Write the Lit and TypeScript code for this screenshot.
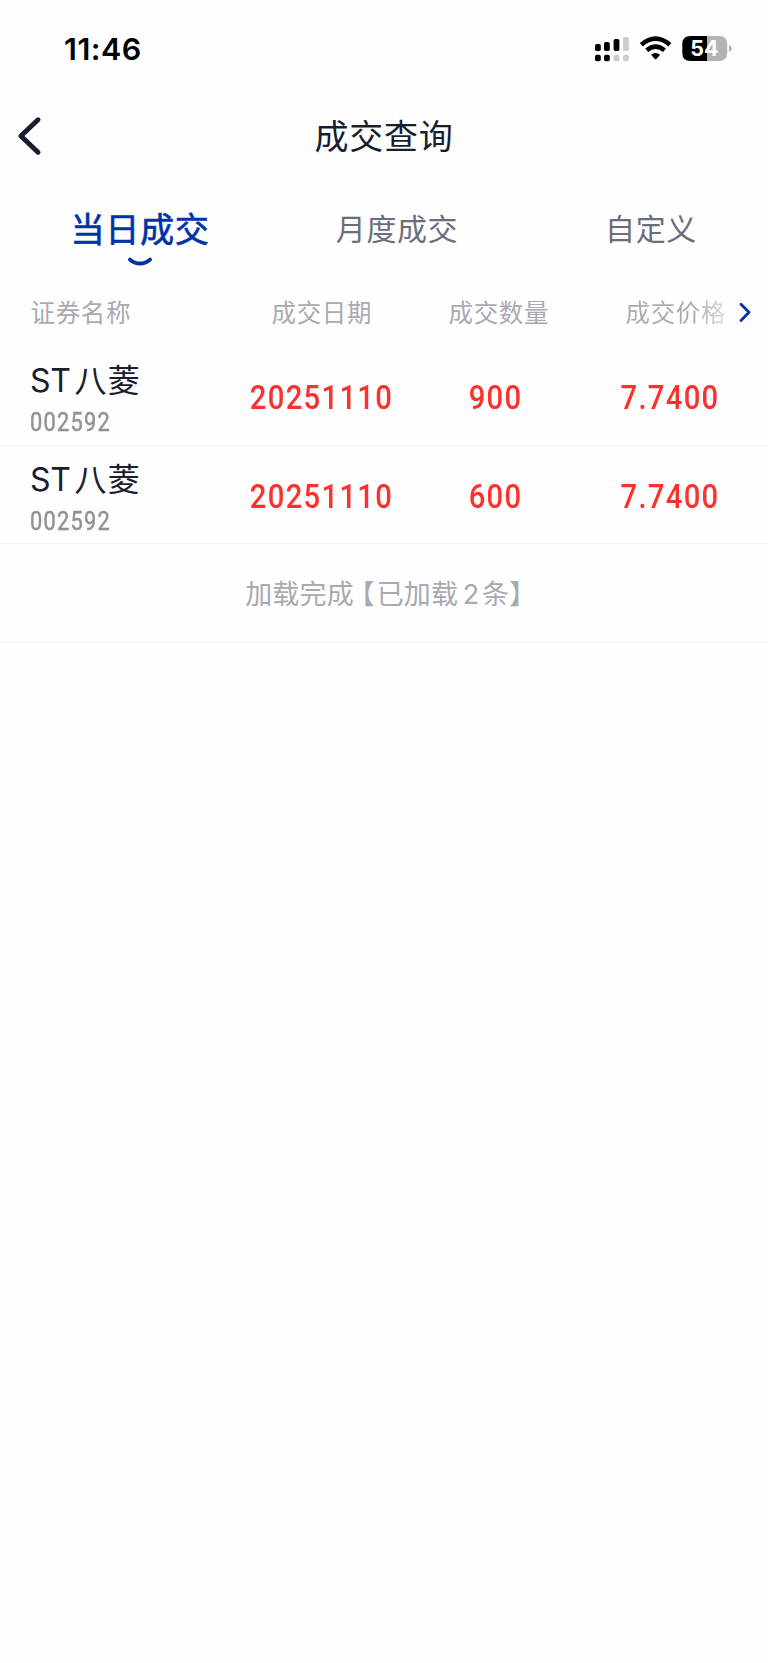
import { LitElement, html, css, svg } from "lit";
import { customElement, property } from "lit/decorators.js";

interface Trade {
  name: string;
  code: string;
  date: string;
  amount: string;
  price: string;
}

const CJK = css`"Noto Sans CJK SC", sans-serif`;

@customElement("status-bar")
class StatusBar extends LitElement {
  static styles = css`
    :host {
      display: flex;
      justify-content: space-between;
      align-items: center;
      height: 98px;
      box-sizing: border-box;
      padding: 0 36px 0 64px;
      font-family: Inter, sans-serif;
    }
    .time {
      font-size: 30.5px;
      font-weight: 600;
      letter-spacing: 0.5px;
      color: #000;
      padding-bottom: 2px;
    }
    .icons {
      display: block;
    }
    .pct {
      font: 700 21.5px Inter, sans-serif;
    }
  `;
  render() {
    const on = "#000";
    const off = "#ccc";
    const cols = [
      [595, 44, 7], [604, 42, 9], [613.6, 39, 12], [623, 37, 14],
    ];
    return html`
      <span class="time">11:46</span>
      <svg class="icons" width="138" height="30" viewBox="594 34 138 30">
        ${cols.map(([x, y, h], i) => svg`
          <rect x=${x} y=${y} width="5.8" height=${h} rx="1.8" fill=${i < 3 ? on : off}></rect>
          <rect x=${x} y="54.8" width="5.8" height="6.4" rx="1.8" fill=${i < 2 ? on : off}></rect>`)}
        <path d="M641.3 44.8 Q655.6 32.6 669.9 44.8" fill="none" stroke="#000" stroke-width="4.6"></path>
        <path d="M646.7 50.3 Q655.6 42.8 664.5 50.3" fill="none" stroke="#000" stroke-width="4.5"></path>
        <path d="M651 54.8 Q655.6 51.3 660.2 54.8 L656.3 59 Q655.6 59.6 654.9 59 Z" fill="#000"></path>
        <path d="M690.5 36 H707 V61 H690.5 Q682.3 61 682.3 53 V44 Q682.3 36 690.5 36Z" fill="#000"></path>
        <path d="M707 36 H719 Q727.2 36 727.2 44 V53 Q727.2 61 719 61 H707Z" fill="#b3b3b3"></path>
        <path d="M729 45 Q731.8 45.8 731.8 48.5 T729 52Z" fill="#b3b3b3"></path>
        <text class="pct" x="704.3" y="56.3" text-anchor="middle" fill="#fff">54</text>
      </svg>`;
  }
}

@customElement("trade-row")
class TradeRow extends LitElement {
  @property({ attribute: false }) trade!: Trade;
  static styles = css`
    :host {
      display: grid;
      grid-template-columns: 234px 173px 175px 174px;
      height: 98.5px;
      box-sizing: border-box;
      padding-left: 1px;
      border-bottom: 1.5px solid #f6f6f7;
    }
    .stock {
      display: flex;
      flex-direction: column;
      padding: 9.3px 0 0 29px;
    }
    .name {
      display: flex;
      align-items: baseline;
      gap: 4px;
      height: 44px;
      line-height: 44px;
      color: #191d30;
    }
    .latin {
      font-family: Inter, sans-serif;
      font-size: 32px;
      letter-spacing: -0.3px;
    }
    .han {
      font-family: ${CJK};
      font-size: 32px;
      letter-spacing: 1.2px;
    }
    .code {
      font: 400 25.3px/32px Roboto, sans-serif;
      -webkit-text-stroke: 0.5px #929292;
      color: #929292;
      letter-spacing: 1.5px;
      transform: scaleX(0.86);
      transform-origin: left;
      margin-top: 6.9px;
    }
    .num {
      display: flex;
      justify-content: center;
      align-items: center;
      font: 500 34px/40px Roboto, sans-serif;
      letter-spacing: 1.5px;
      color: #fc312d;
      transform: scaleX(0.86);
      padding-top: 2.5px;
    }
  `;
  render() {
    const t = this.trade;
    return html`
      <div class="stock">
        <div class="name"><span class="latin">ST</span><span class="han">${t.name}</span></div>
        <div class="code">${t.code}</div>
      </div>
      <div class="num">${t.date}</div>
      <div class="num">${t.amount}</div>
      <div class="num">${t.price}</div>`;
  }
}

@customElement("app-root")
class AppRoot extends LitElement {
  static styles = css`
    :host {
      display: block;
      min-height: 1663px;
      background: #fefefe;
      font-family: ${CJK};
    }
    .nav {
      display: grid;
      grid-template-columns: 60px 1fr 60px;
      align-items: center;
      height: 76px;
    }
    .back {
      display: block;
      margin-left: 16px;
    }
    .title {
      text-align: center;
      font-size: 34px;
      line-height: 50px;
      letter-spacing: 0.8px;
      color: #191d30;
      padding-bottom: 3px;
    }
    .tabs {
      display: grid;
      grid-template-columns: 280px 234px 274px;
      height: 106px;
      padding-top: 8px;
      box-sizing: border-box;
      width: 768px;
    }
    .tab {
      display: flex;
      flex-direction: column;
      align-items: center;
      font-size: 30px;
      line-height: 90px;
      height: 90px;
      letter-spacing: 0.6px;
      color: #6b6d7c;
    }
    .active {
      font-size: 34.2px;
      -webkit-text-stroke: 0.6px #0032a8;
      letter-spacing: 0.6px;
      color: #0032a8;
    }
    .smile {
      display: block;
      margin-top: -15px;
      flex: none;
    }
    .heads {
      display: grid;
      grid-template-columns: 241px 177px 177px 104px 1fr;
      align-items: center;
      height: 67px;
      padding-left: 30.5px;
      font-size: 24.5px;
      letter-spacing: 0.65px;
      color: #a9a9b1;
    }
    .heads span {
      padding-bottom: 4px;
    }
    .fade {
      background: linear-gradient(90deg, #a9a9b1 65%, #e3e3e6 98%);
      background-clip: text;
      -webkit-background-clip: text;
      color: transparent;
    }
    .more {
      display: block;
      margin: 0 0 3px 7px;
    }
    .done {
      display: flex;
      justify-content: center;
      align-items: baseline;
      height: 98.5px;
      line-height: 98px;
      box-sizing: border-box;
      border-bottom: 2px solid #f8f8fc;
      font-size: 27px;
      letter-spacing: 0.2px;
      color: #a9a9b1;
    }
    .open,
    .close {
      font-feature-settings: "halt";
    }
    .open {
      margin: 0 2px 0 7px;
    }
    .count {
      font-family: Inter, sans-serif;
      margin: 0 2.5px 0 4.5px;
    }
  `;
  private trades: Trade[] = [
    { name: "八菱", code: "002592", date: "20251110", amount: "900", price: "7.7400" },
    { name: "八菱", code: "002592", date: "20251110", amount: "600", price: "7.7400" },
  ];
  render() {
    return html`
      <status-bar></status-bar>
      <div class="nav">
        <svg class="back" width="28" height="42" viewBox="16 115 28 42">
          <path d="M38 119.8 L20.9 136 L38 152.2" fill="none" stroke="#191d30" stroke-width="5" stroke-linecap="round" stroke-linejoin="round"></path>
        </svg>
        <div class="title">成交查询</div>
      </div>
      <div class="tabs">
        <div class="tab active">当日成交
          <svg class="smile" width="26" height="12" viewBox="0 0 26 12">
            <path d="M3 2.6 C8.5 7.8 17.5 7.8 23 2.6" fill="none" stroke="#0032a8" stroke-width="3.8" stroke-linecap="round"></path>
          </svg>
        </div>
        <div class="tab">月度成交</div>
        <div class="tab">自定义</div>
      </div>
      <div class="heads">
        <span>证券名称</span><span>成交日期</span><span>成交数量</span><span class="fade">成交价格</span>
        <svg class="more" width="16" height="24" viewBox="737 300 16 24">
          <path d="M741 304.2 L749 312.3 L741 320.4" fill="none" stroke="#0032a8" stroke-width="2.8" stroke-linecap="round" stroke-linejoin="round"></path>
        </svg>
      </div>
      ${this.trades.map((t) => html`<trade-row .trade=${t}></trade-row>`)}
      <div class="done">
        <span>加载完成</span><span class="open">【</span><span>已加载</span><span class="count">2</span><span>条</span><span class="close">】</span>
      </div>`;
  }
}
